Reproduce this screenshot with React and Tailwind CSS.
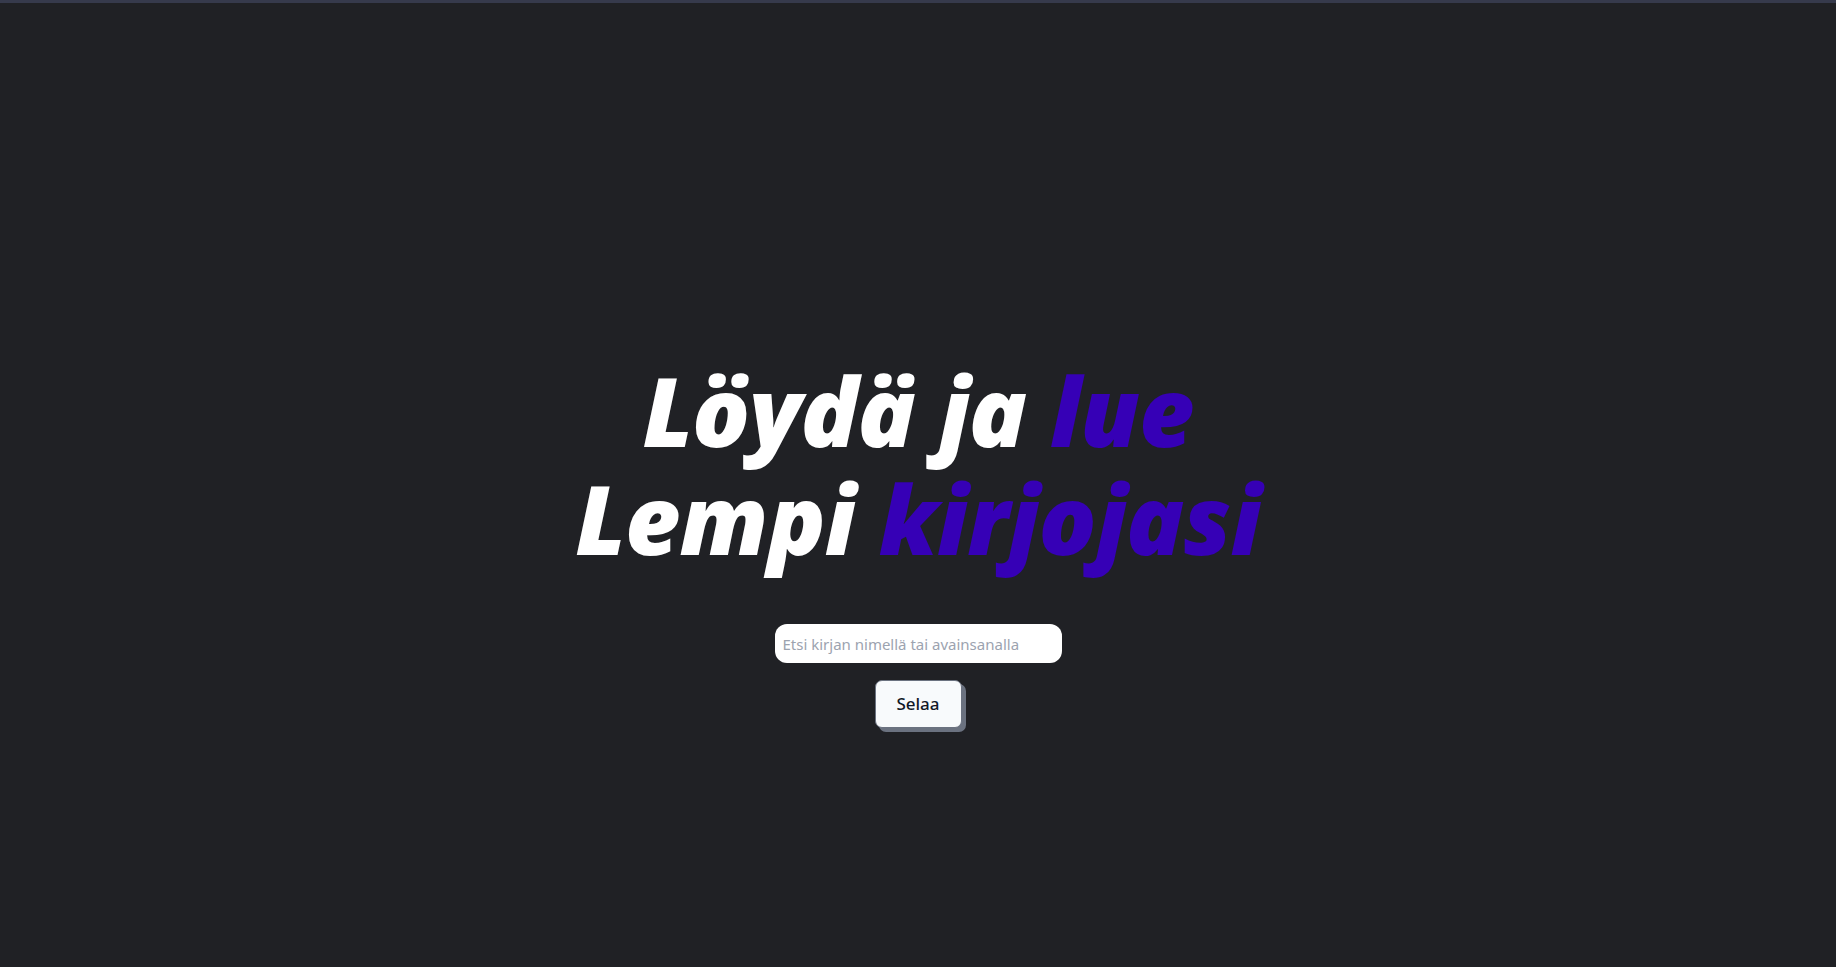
export default function App() {
  return (
    <div className="min-h-screen w-full bg-[#202125] border-t-[3px] border-[#363a4c] flex flex-col items-center pt-[353px]">
      <h1
        className="flex flex-col items-center text-center text-[96px] leading-[108px] font-extrabold italic text-white tracking-[-1px]"
        style={{ fontFamily: '"Open Sans", "Lato", sans-serif' }}
      >
        <span className="block h-[108px] whitespace-pre">
          <span className="inline-block h-[108px] leading-[108px]">Löydä ja </span>
          <span className="inline-block h-[108px] leading-[108px] text-[#3600b6]">lue</span>
        </span>
        <span className="block h-[108px] whitespace-pre">
          <span className="inline-block h-[108px] leading-[108px]">Lempi </span>
          <span className="inline-block h-[108px] leading-[108px] text-[#3600b6]">kirjojasi</span>
        </span>
      </h1>
      <input
        type="text"
        placeholder="Etsi kirjan nimellä tai avainsanalla"
        className="mt-[52px] w-[287px] h-[39px] rounded-[12px] bg-white px-2 text-[15px] text-gray-800 placeholder:text-[#9ca3af] outline-none"
        style={{ fontFamily: '"Noto Sans", sans-serif' }}
      />
      <button
        className="mt-[17px] w-[87px] h-[48px] rounded-[7px] bg-[#f8fafc] border border-[#6b7280] shadow-[4px_4px_0_0_#6b7280] text-[17px] font-medium text-[#111827]"
        style={{ fontFamily: '"Noto Sans", sans-serif' }}
      >
        Selaa
      </button>
    </div>
  );
}
